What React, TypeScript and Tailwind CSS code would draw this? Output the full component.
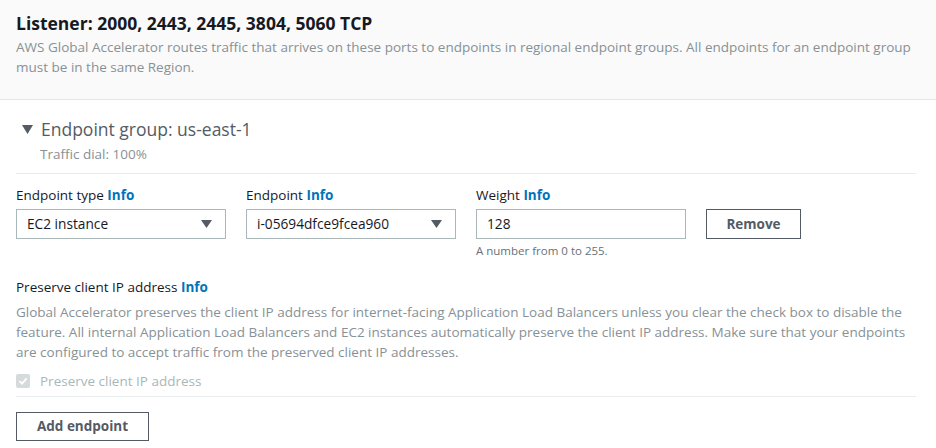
const font = { fontFamily: '"Open Sans", "Noto Sans", sans-serif' };

function Info() {
  return <span className="font-bold text-[#0073bb]">Info</span>;
}

function Caret() {
  return (
    <svg width="11" height="8" viewBox="0 0 11 8" className="shrink-0">
      <path d="M0 0 H11 L5.5 8 Z" fill="#545b64" />
    </svg>
  );
}

function Field({ label, children, hint }: { label: string; children: React.ReactNode; hint?: string }) {
  return (
    <div className="flex w-[210px] flex-col">
      <div className="h-[20px] text-[13.5px] leading-[20px] text-[#16191f]">
        {label} <Info />
      </div>
      <div className="mt-[4px]">{children}</div>
      {hint ? <div className="mt-[4px] text-[11.5px] leading-[16px] text-[#687078]">{hint}</div> : null}
    </div>
  );
}

function Select({ value }: { value: string }) {
  return (
    <div className="flex h-[30px] items-center justify-between border border-[#aab7b8] bg-white pl-[10px] pr-[13px] text-[13.7px] text-[#16191f]">
      <span>{value}</span>
      <Caret />
    </div>
  );
}

export default function App() {
  return (
    <div style={font} className="h-[448px] w-[936px] overflow-hidden bg-white text-[#16191f]">
      <div className="h-[100px] border-b border-[#e4e6e6] bg-[#fafafa] px-4 pt-[10px]">
        <h2 className="text-[17.5px] font-bold leading-[26px] text-[#16191f]">
          Listener: 2000, 2443, 2445, 3804, 5060 TCP
        </h2>
        <p className="mt-[1px] text-[13.5px] leading-[20px] text-[#879196]">
          AWS Global Accelerator routes traffic that arrives on these ports to endpoints in regional endpoint groups. All endpoints for an endpoint group must be in the same Region.
        </p>
      </div>
      <div className="px-4">
        <div className="mr-[4px] border-b border-[#eaeded] pb-[9px] pt-[16px]">
          <div className="flex items-center">
            <svg width="11" height="9" viewBox="0 0 11 9" className="ml-[6px] mr-[8px]">
              <path d="M0 0 H11 L5.5 9 Z" fill="#545b64" />
            </svg>
            <span className="text-[17.5px] leading-[26px] text-[#545b64]">Endpoint group: us-east-1</span>
          </div>
          <div className="mt-[2px] pl-[24px] text-[13.5px] leading-[20px] text-[#879196]">Traffic dial: 100%</div>
        </div>
        <div className="flex gap-[20px] pt-[11px]">
          <Field label="Endpoint type">
            <Select value="EC2 instance" />
          </Field>
          <Field label="Endpoint">
            <Select value="i-05694dfce9fcea960" />
          </Field>
          <Field label="Weight" hint="A number from 0 to 255.">
            <div className="flex h-[30px] items-center border border-[#aab7b8] bg-white px-[10px] text-[13.7px]">128</div>
          </Field>
          <div className="flex flex-col">
            <div className="h-[24px]" />
            <button className="h-[30px] w-[95px] border border-[#545b64] bg-white text-[13.5px] font-bold text-[#545b64]">
              Remove
            </button>
          </div>
        </div>
        <div className="mr-[4px] border-b border-[#eaeded] pb-[5px] pt-[18px]">
          <div className="text-[13.5px] leading-[20px]">
            Preserve client IP address <Info />
          </div>
          <p className="mt-[5px] text-[13.5px] leading-[20px] text-[#879196]">
            Global Accelerator preserves the client IP address for internet-facing Application Load Balancers unless you clear the check box to disable the feature. All internal Application Load Balancers and EC2 instances automatically preserve the client IP address. Make sure that your endpoints are configured to accept traffic from the preserved client IP addresses.
          </p>
          <label className="mt-[9px] flex items-center gap-[10px] text-[13.5px] leading-[20px] text-[#aab7b8]">
            <span className="flex h-[14px] w-[14px] items-center justify-center rounded-[2px] bg-[#d5dbdb]">
              <svg width="10" height="10" viewBox="0 0 10 10">
                <path d="M1.5 5.2 L4 7.6 L8.6 2.4" stroke="white" strokeWidth="1.8" fill="none" />
              </svg>
            </span>
            Preserve client IP address
          </label>
        </div>
        <button className="mt-[15px] h-[29px] w-[133px] border border-[#545b64] bg-white text-[13.5px] font-bold text-[#545b64]">
          Add endpoint
        </button>
      </div>
    </div>
  );
}
